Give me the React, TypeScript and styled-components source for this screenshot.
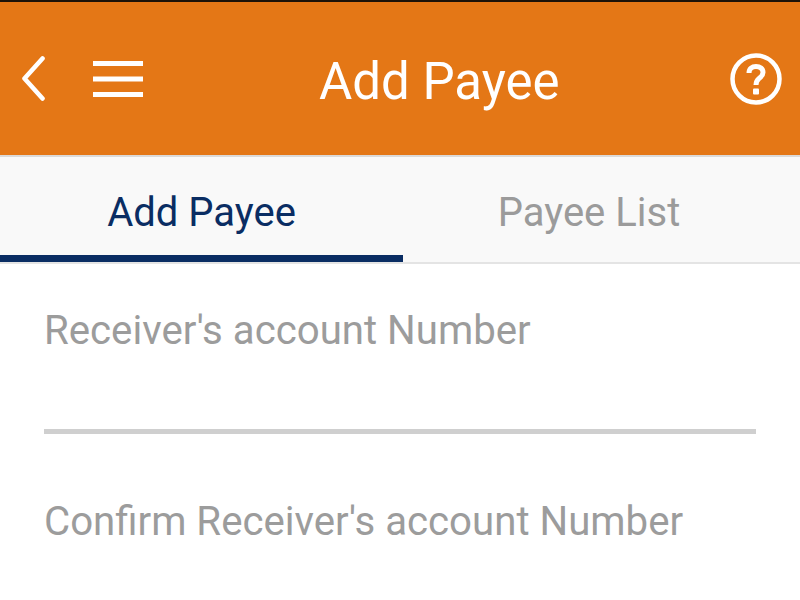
import React from "react";
import styled, { createGlobalStyle } from "styled-components";

const GlobalStyle = createGlobalStyle`
  html, body {
    margin: 0;
    padding: 0;
    background: #fff;
    overflow: hidden;
  }
  * { box-sizing: border-box; }
`;

const Page = styled.div`
  width: 800px;
  height: 600px;
  overflow: hidden;
  background: #fff;
  font-family: Roboto, "Liberation Sans", sans-serif;
`;

const Header = styled.header`
  height: 157px;
  border-top: 2px solid #1c1208;
  border-bottom: 2px solid #dcdad8;
  background: #e47716;
  display: flex;
  align-items: center;
  padding: 0 18px 0 21px;
`;

const HeaderLeft = styled.div`
  flex: 0 0 298px;
  display: flex;
  align-items: center;
  gap: 48px;
`;

const Title = styled.h1`
  flex: 1;
  margin: 6px 0 0;
  font-size: 51px;
  font-weight: 400;
  line-height: 60px;
  color: #fff;
`;

const IconButton = styled.span`
  display: flex;
  color: #fff;
`;

const Tabs = styled.nav`
  height: 107px;
  display: flex;
  background: #f9f9f9;
  border-bottom: 2px solid #e4e4e4;
`;

const Tab = styled.div<{ $active?: boolean }>`
  flex: ${(p) => (p.$active ? "0 0 403px" : "0 0 372px")};
  height: 105px;
  padding-top: 32px;
  text-align: center;
  font-size: 40px;
  line-height: 48px;
  color: ${(p) => (p.$active ? "#0a2d63" : "#9b9b9b")};
  border-bottom: ${(p) => (p.$active ? "7px solid #0a2d63" : "none")};
`;

const Form = styled.form`
  padding: 43px 44px 0;
  display: flex;
  flex-direction: column;
`;

const Field = styled.div`
  height: 127px;
  margin-bottom: 64px;
  border-bottom: 5px solid #cfcfcf;
`;

const Label = styled.label`
  display: block;
  font-size: 40.2px;
  line-height: 48px;
  color: #9c9c9c;
`;

export default function App() {
  return (
    <Page>
      <GlobalStyle />
      <Header>
        <HeaderLeft>
          <IconButton>
            <svg width="24" height="46" viewBox="0 0 24 46" fill="none">
              <path d="M21.5 2.5 L3.5 22.5 L21.5 42.5" stroke="#fff" strokeWidth="4.6" strokeLinecap="round" strokeLinejoin="round" />
            </svg>
          </IconButton>
          <IconButton>
            <svg width="50" height="38" viewBox="0 0 50 38" fill="none">
              <path d="M0 3.5H50M0 19H50M0 34.5H50" stroke="#fff" strokeWidth="5" />
            </svg>
          </IconButton>
        </HeaderLeft>
        <Title>Add Payee</Title>
        <IconButton>
          <svg width="52" height="52" viewBox="0 0 52 52" fill="none">
            <circle cx="26" cy="26" r="23.5" stroke="#fff" strokeWidth="4.5" />
            <path d="M19 20C19 15.5 22 13.5 26 13.5C30 13.5 33 15.5 33 19.5C33 22.5 31 24 29 25.5C27 27 26 28.5 26 32" stroke="#fff" strokeWidth="5" />
            <rect x="23" y="35.5" width="6" height="6" rx="1" fill="#fff" />
          </svg>
        </IconButton>
      </Header>
      <Tabs>
        <Tab $active>Add Payee</Tab>
        <Tab>Payee List</Tab>
      </Tabs>
      <Form>
        <Field>
          <Label>Receiver's account Number</Label>
        </Field>
        <Field>
          <Label>Confirm Receiver's account Number</Label>
        </Field>
      </Form>
    </Page>
  );
}
